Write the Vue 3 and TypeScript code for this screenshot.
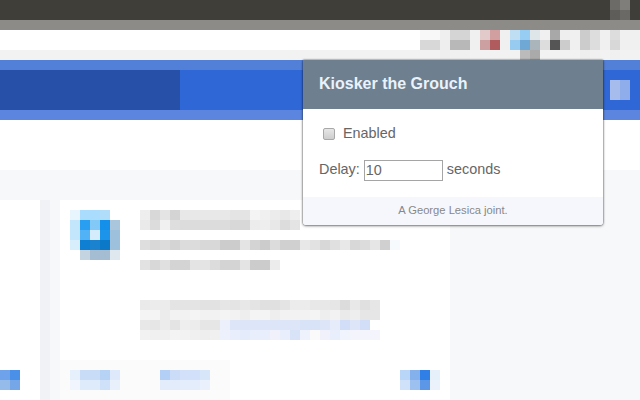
<template>
  <div class="page">
    <div class="titlebar">
      <Mosaic :rows="tiles.window" />
    </div>
    <div class="tabstrip"></div>
    <div class="toolbar">
      <div class="toolbar-blank"></div>
      <Mosaic :rows="tiles.extensions" />
    </div>

    <div class="hero">
      <div class="hero-top"></div>
      <div class="hero-main">
        <div class="hero-search"></div>
        <Mosaic class="hero-avatar" :rows="tiles.heroAvatar" />
      </div>
      <div class="hero-bottom"></div>
    </div>

    <div class="subnav"></div>

    <div class="feed">
      <div class="card-left">
        <Mosaic class="left-action" :rows="tiles.leftAction" />
      </div>
      <div class="gutter"></div>
      <div class="card">
        <div class="card-body">
          <Mosaic :rows="tiles.avatar" />
          <div class="card-text">
            <Mosaic :rows="tiles.heading" />
            <Mosaic :rows="tiles.summary" />
            <Mosaic class="card-link" :rows="tiles.link" />
          </div>
        </div>
        <div class="card-footer">
          <div class="card-actions">
            <Mosaic :rows="tiles.like" />
            <Mosaic :rows="tiles.comment" />
          </div>
          <Mosaic :rows="tiles.share" />
        </div>
      </div>
    </div>

    <section class="popup">
      <h1 class="popup-title">Kiosker the Grouch</h1>
      <div class="popup-body">
        <label class="enabled">
          <input v-model="enabled" type="checkbox" />
          <span>Enabled</span>
        </label>
        <div class="delay">
          <label for="delay">Delay:</label>
          <input id="delay" v-model="delay" type="text" />
          <span>seconds</span>
        </div>
      </div>
      <footer class="popup-footer">A George Lesica joint.</footer>
    </section>
  </div>
</template>

<script setup lang="ts">
import { h, ref } from 'vue'

// the reference is blurred behind the popup: each tile is one 10px block
// two hex digits = grey, six = colour
const parse = (rows: string[]) =>
  rows.map((row) => row.split(' ').map((c) => (c.length === 2 ? `#${c}${c}${c}` : `#${c}`)))

const Mosaic = (props: { rows: string[] }) =>
  h(
    'div',
    { class: 'mosaic' },
    parse(props.rows).map((row) =>
      h(
        'div',
        { class: 'mosaic-row' },
        row.map((background) => h('i', { class: 'mosaic-tile', style: { background } }))
      )
    )
  )
Mosaic.props = ['rows']

const tiles = {
  window: ['6c6b67 7f7e7a', '5e5d59 6a6965'],
  extensions: [
    'f8 f8 ef d5 d5 f0 e3caca d19fa0 f0 bfddf3 97cdf3 dfe6ea f0 a8 ee f0 cc dd f0 dd f0 f0',
    'd8 d8 ee b8 b8 f0 cc9fa0 b05c5e f0 97cbf0 6fa8d4 a9b5bb dd 55 cc f0 cc dd f0 d8 f0 f0',
    'f2 f2 ee f0 f0 f2 f2 f2 f2 f2 bb aa f2 f2 f2 f2 ee f0 f2 f0 f2 f2'
  ],
  heroAvatar: ['a5bcec 8fadea', 'a5bcec 8fadea'],
  leftAction: ['6ea3ec 4a8fe8', '94bbea 74a6e8'],
  avatar: [
    'e8f5fe aadcfd aadcfd b0defa ff',
    'c4e6fd 2a9ef0 82c9f8 1590ea a9c6dc',
    'c4e6fd 52b2f6 d4ecfc 1b94ea 9dc0dc',
    'd8eefc 0f7fd4 1b82cf 0b78c8 9dc0dc',
    'ff c4d4e0 a5bdd2 a5bdd2 e0e8ef'
  ],
  heading: [
    'ee d8 e4 d4 e8 e8 e8 e8 e8 e4 e4 f4 f0 ec e8 ee',
    'ea dc f0 de dc dc dc dc dc d8 d8 ec ee e8 dc e4'
  ],
  summary: [
    'de d8 dc d4 dc dc d8 d8 cc cc e4 d4 cc dc d0 d0 e8 e2 d8 e0 e8 d8 dc e6 d0 f6fafc',
    'ff ff ff ff ff ff ff ff ff ff ff ff ff ff ff ff ff ff ff ff ff ff ff ff ff ff',
    'e2 d8 e0 d4 d4 e4 e4 dc d4 d4 e4 cc cc ec'
  ],
  link: [
    'ea ec ec e4 e4 e4 e2 e2 e6 e4 e8 e4 e0 e0 e4 ec ec e8 e8 e6 dc e8 e0 e6',
    'f4 f4 ec f2 f2 f4 f2 f2 f4 f2 ee f4 f4 ee f2 f2 f2 f4 ee f2 ea ee e6 e6',
    'e8 e6 ec e4 ee ec e6 e6 ecf0fd dde6f8 dde6f8 dde6f8 dde6f8 dde6f8 dde6f8 dde6f8 d8e3f8 d8e3f8 dde6f8 e6ecfa d2def8 dde6f8 d2def8 ff',
    'f2 f0 f0 f4 f2 f0 ee f0 edf1fc e8eefb e4ebfb e8eefb e8eefb f0f1fb e8eefb d8e3f8 eef2fc fa f0f1fb e8eefb f0f4fc f4f5fc f4f5fc f4f5fc'
  ],
  like: [
    'e6effc c8dcf8 c8dcf8 b6d2f5 deeafb',
    'f1f5fd deebfb deebfb cfe1f8 e8f0fc'
  ],
  comment: [
    'b4cff6 cbdcf8 d2e1f9 d2e1f9 d8e6fa',
    'e2ecfb e2ecfb e4edfb e4edfb eaf1fc'
  ],
  share: ['b9d5f8 84b0ec 2f7fe6 e6f0fb', 'd0e2f9 9cc0f0 5c96e6 ecf2fc']
}

const enabled = ref(false)
const delay = ref('10')
</script>

<style scoped>
* {
  box-sizing: border-box;
}

.page {
  position: relative;
  display: flex;
  flex-direction: column;
  width: 640px;
  height: 400px;
  overflow: hidden;
  background: #f7f8f9;
  font-family: "Liberation Sans", Arial, sans-serif;
}

.titlebar {
  display: flex;
  flex: none;
  justify-content: flex-end;
  height: 20px;
  padding-right: 10px;
  background: #403e39;
}

.tabstrip {
  flex: none;
  height: 10px;
  background: #8c8b88;
}

.toolbar {
  display: flex;
  flex: none;
  height: 30px;
}

.toolbar-blank {
  flex: 1;
  border-bottom: 10px solid #f2f2f2;
  background: #fff;
}

.hero {
  display: flex;
  flex: none;
  flex-direction: column;
  height: 60px;
}

.hero-top {
  height: 10px;
  background: #527fd8;
}

.hero-main {
  display: flex;
  justify-content: flex-end;
  align-items: center;
  height: 40px;
  padding-right: 10px;
  background: #3067d6;
}

.hero-search {
  width: 180px;
  height: 40px;
  margin-right: auto;
  background: #2750a8;
}

.hero-bottom {
  height: 10px;
  background: #5c85df;
}

.subnav {
  flex: none;
  height: 50px;
  background: #fff;
}

.feed {
  display: flex;
  flex: none;
  height: 230px;
  padding-top: 30px;
}

.card-left {
  display: flex;
  flex-direction: column;
  justify-content: flex-end;
  width: 40px;
  padding-bottom: 10px;
  background: #fff;
}

.gutter {
  width: 10px;
  background: #f1f2f5;
}

.card {
  display: flex;
  flex-direction: column;
  width: 390px;
  margin-left: 10px;
  background: #fff;
}

.card-body {
  display: flex;
  gap: 20px;
  height: 160px;
  padding: 10px;
}

.card-text {
  display: flex;
  flex-direction: column;
  gap: 10px;
}

.card-link {
  margin-top: 20px;
}

.card-footer {
  display: flex;
  justify-content: space-between;
  height: 40px;
  padding-right: 10px;
}

.card-actions {
  display: flex;
  gap: 40px;
  width: 170px;
  padding: 10px;
  background: #fbfbfc;
}

.card-footer > :last-child {
  margin-top: 10px;
}

.popup {
  position: absolute;
  top: 60px;
  left: 303px;
  display: flex;
  flex-direction: column;
  width: 300px;
  height: 165px;
  overflow: hidden;
  border-radius: 0 0 3px 3px;
  background: #fff;
  box-shadow: 0 0 2px rgba(0, 0, 0, 0.7), 0 1px 3px rgba(0, 0, 0, 0.4);
  color: #666;
  font-size: 14.4px;
}

.popup-title {
  height: 49px;
  margin: 0;
  padding-left: 16px;
  background: #6e7f8f;
  color: #eaf2fb;
  font-size: 16px;
  font-weight: 700;
  line-height: 48px;
}

.popup-body {
  flex: 1;
  display: flex;
  flex-direction: column;
  gap: 19px;
  padding: 16px 16px 0;
}

.enabled {
  display: flex;
  align-items: center;
  gap: 8px;
  height: 16px;
  padding-left: 4px;
}

.enabled input {
  width: 12px;
  height: 12px;
  margin: 2px 0 0;
  appearance: none;
  border: 1px solid #a8a8a8;
  border-radius: 2px;
  background: linear-gradient(#e6e6e6, #cdcdcd);
}

.delay {
  display: flex;
  align-items: center;
  gap: 4px;
  height: 21px;
}

.delay label,
.delay span {
  margin-bottom: 3px;
}

.delay input {
  width: 79px;
  height: 21px;
  margin: 0;
  padding: 0 1px 2px;
  border: 1px solid #a5a5a5;
  background: #fff;
  color: #666;
  font: inherit;
  outline: none;
}

.popup-footer {
  height: 28px;
  background: #f6f7fd;
  color: #888;
  font-size: 11.2px;
  line-height: 27px;
  text-align: center;
}
</style>

<style>
.mosaic {
  display: flex;
  flex-direction: column;
}

.mosaic-row {
  display: flex;
  height: 10px;
}

.mosaic-tile {
  display: block;
  width: 10px;
  height: 10px;
}
</style>
